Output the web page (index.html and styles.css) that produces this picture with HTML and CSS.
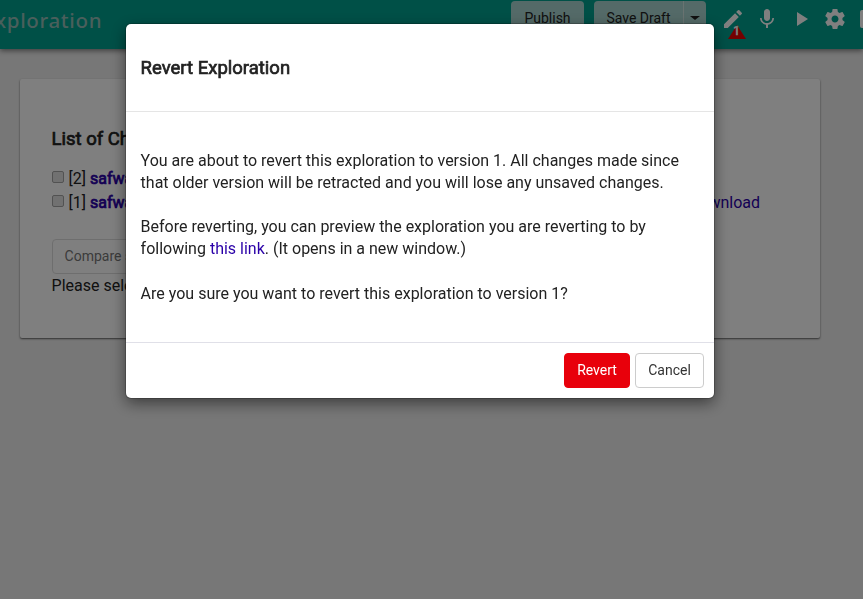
FILE: index.html
```html
<!DOCTYPE html>
<html lang="en">
<head>
<meta charset="utf-8">
<title>Revert Exploration</title>
<link rel="stylesheet" href="styles.css">
</head>
<body>
<header class="navbar">
  <div class="nav-title">xploration</div>
  <div class="nav-actions">
    <button class="nav-btn publish">Publish</button>
    <div class="btn-group">
      <button class="nav-btn save">Save Draft</button>
      <button class="nav-btn toggle" aria-label="More"><span class="caret"></span></button>
    </div>
  </div>
  <nav class="nav-icons">
    <a class="nav-icon"><svg viewBox="0 0 24 24"><path d="M3 17.25V21h3.75L17.81 9.94l-3.75-3.75L3 17.25zM20.71 7.04a1 1 0 0 0 0-1.41l-2.34-2.34a1 1 0 0 0-1.41 0l-1.83 1.83 3.75 3.75 1.83-1.83z"/></svg><span class="warning"><svg viewBox="0 0 18 14"><path d="M9 0L18 14H0z"/></svg><b>1</b></span></a>
    <a class="nav-icon"><svg viewBox="0 0 24 24"><path d="M12 14c1.66 0 2.99-1.34 2.99-3L15 5c0-1.66-1.34-3-3-3S9 3.340 9 5v6c0 1.660 1.340 3 3 3zm5.300-3c0 3-2.540 5.100-5.300 5.100S6.700 14 6.700 11H5c0 3.410 2.720 6.230 6 6.720V21h2v-3.280c3.280-.48 6-3.300 6-6.720h-1.700z"/></svg></a>
    <a class="nav-icon"><svg viewBox="0 0 24 24"><path d="M8 5v14l11-7z"/></svg></a>
    <a class="nav-icon"><svg viewBox="0 0 24 24"><path d="M19.430 12.980c.04-.32.07-.64.07-.98s-.03-.66-.07-.98l2.110-1.650c.19-.15.24-.42.12-.64l-2-3.460c-.12-.22-.39-.3-.61-.22l-2.490 1c-.52-.4-1.080-.73-1.690-.98l-.38-2.650C14.460 2.180 14.250 2 14 2h-4c-.25 0-.46.18-.49.42l-.38 2.650c-.61.25-1.170.59-1.690.98l-2.490-1c-.23-.09-.49 0-.61.22l-2 3.460c-.13.22-.07.49.12.64l2.110 1.650c-.04.32-.07.65-.07.98s.03.66.07.98l-2.110 1.650c-.19.15-.24.42-.12.64l2 3.460c.12.22.39.3.61.22l2.490-1c.52.4 1.080.73 1.690.98l.38 2.650c.03.24.24.42.49.42h4c.25 0 .46-.18.49-.42l.38-2.650c.61-.25 1.170-.59 1.690-.98l2.490 1c.23.09.49 0 .61-.22l2-3.460c.12-.22.07-.49-.12-.64l-2.110-1.650zM12 15.500c-1.930 0-3.500-1.570-3.500-3.500s1.570-3.500 3.500-3.500 3.500 1.570 3.500 3.500-1.570 3.500-3.500 3.500z"/></svg></a>
    <a class="nav-icon"><svg viewBox="0 0 24 24"><path d="M5 3h14a2 2 0 0 1 2 2v14a2 2 0 0 1-2 2H5a2 2 0 0 1-2-2V5a2 2 0 0 1 2-2z"/></svg></a>
  </nav>
</header>
<main class="card">
  <h3>List of Changes</h3>
  <div class="version"><span class="check"></span><span>[2] <a><b>safwan</b></a></span></div>
  <div class="version"><span class="check"></span><span>[1] <a><b>safwan</b></a></span><a class="download">Download</a></div>
  <button class="compare">Compare selected</button>
  <p class="hint">Please select</p>
</main>
<div class="backdrop">
  <section class="modal" role="dialog" aria-modal="true">
    <div class="modal-header"><h3>Revert Exploration</h3></div>
    <div class="modal-body">
      <p>You are about to revert this exploration to version 1. All changes made since that older version will be retracted and you will lose any unsaved changes.</p>
      <p>Before reverting, you can preview the exploration you are reverting to by following <a>this link</a>. (It opens in a new window.)</p>
      <p>Are you sure you want to revert this exploration to version 1?</p>
    </div>
    <div class="modal-footer">
      <button class="btn danger">Revert</button>
      <button class="btn">Cancel</button>
    </div>
  </section>
</div>
</body>
</html>
```
FILE: styles.css
```css
* { box-sizing: border-box; }
body {
  margin: 0;
  height: 599px;
  overflow: hidden;
  background: #eee;
  color: #222;
  font: 16px/22px Roboto, sans-serif;
}
h3, p { margin: 0; }
h3 { font-size: 18.5px; line-height: 20px; font-weight: 400; -webkit-text-stroke: 0.7px currentColor; }
a { color: #2a00a8; }
a b { font-weight: 400; -webkit-text-stroke: 0.7px currentColor; }
button { font: 14px/20px Roboto, sans-serif; margin: 0; }

.navbar {
  display: flex;
  height: 49px;
  background: #00a08f;
  box-shadow: 0 2px 5px rgba(0, 0, 0, .45);
}
.nav-title {
  flex: none;
  width: 511px;
  margin-left: -5px;
  padding-top: 5px;
  color: #94bfb8;
  font: 500 20.5px/30px "Noto Sans", sans-serif;
  letter-spacing: 0.65px;
}
.nav-actions { display: flex; gap: 10px; padding: 1px 0 0 5px; width: 205px; flex: none; }
.nav-btn {
  height: 35px;
  border: 0;
  padding: 0 0 2px;
  background: #a9d5d0;
  color: #222;
}
.publish { width: 73px; border-radius: 4px; }
.btn-group { display: flex; }
.save { width: 89px; border-radius: 4px 0 0 4px; }
.toggle { width: 23px; border-left: 1px solid #d2e6e3; border-radius: 0 4px 4px 0; }
.caret { display: block; margin: 0 auto; width: 10px; border: 5px solid transparent; border-top-color: #222; border-top-width: 4px; border-bottom: 0; }
.nav-icons { display: flex; gap: 10px; padding: 7px 0 0 9.5px; }
.nav-icon { position: relative; flex: none; width: 24px; height: 24px; }
.nav-icon svg { display: block; width: 100%; height: 100%; fill: #fff; }
.warning { position: absolute; left: 7px; top: 18px; width: 18px; height: 14px; }
.warning svg { fill: #e80000; }
.warning b { position: absolute; inset: 0; text-align: center; color: #fff; font: 12px/13px Roboto, sans-serif; }

.card {
  width: 800px;
  height: 259px;
  margin: 30px 0 0 20px;
  padding: 50px 60px 0 31.6px;
  background: #fff;
  border-radius: 2px;
  box-shadow: 0 1px 2px rgba(0, 0, 0, .6);
}
.card h3 { margin-bottom: 17px; }
.version { display: flex; align-items: center; height: 24px; }
.version > span:last-of-type, .download { position: relative; top: 0.5px; }
.check { flex: none; width: 12px; height: 12px; margin: -2px 5px 0 0; border: 1px solid #a4a4a4; border-radius: 2px; background: #e2e2e2; }
.download { margin-left: auto; }
.compare {
  display: block;
  height: 35px;
  margin-top: 25px;
  padding: 0 12px 2px;
  color: #777;
  background: #fff;
  border: 1px solid #ddd;
  border-radius: 4px;
}
.hint { padding-top: 1px; }

.backdrop { position: fixed; inset: 0; padding-top: 24px; background: rgba(0, 0, 0, .5); }
.modal {
  width: 588px;
  height: 374px;
  margin-left: 126px;
  background: #fff;
  border-radius: 5px;
  box-shadow: 0 5px 15px rgba(0, 0, 0, .5), 0 0 0 1px rgba(0, 0, 0, .2);
}
.modal-header { height: 88px; padding: 34px 14.6px; border-bottom: 1px solid #e5e5e5; }
.modal-body { height: 230px; padding: 38px 14.6px 0; }
.modal-body p { margin-bottom: 22px; }
.modal-body p:nth-child(2) { margin-bottom: 23px; }
.modal-footer { display: flex; justify-content: flex-end; gap: 5px; padding: 10px; border-top: 1px solid #e0e0e8; }
.btn { width: 69px; height: 35px; padding: 0 0 2px; background: #fff; color: #333; border: 1px solid #ccc; border-radius: 4px; }
.danger { width: 66px; background: #e8000b; border-color: #e8000b; color: #fff; }
```
